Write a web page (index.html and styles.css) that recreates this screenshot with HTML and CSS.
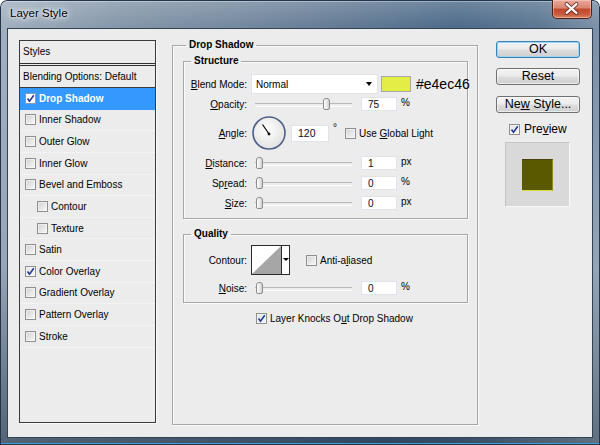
FILE: index.html
```html
<!DOCTYPE html>
<html>
<head>
<meta charset="utf-8">
<title>Layer Style</title>
<link rel="stylesheet" href="styles.css">
</head>
<body>
<div class="window">
  <div class="titlebar">
    <span class="title">Layer Style</span>
    <span class="close">
      <svg width="40" height="19" viewBox="0 0 40 19">
        <path d="M15 5 L25 14 M25 5 L15 14" stroke="#5a1c10" stroke-width="4" stroke-linecap="round"/>
        <path d="M15 5 L25 14 M25 5 L15 14" stroke="#ffffff" stroke-width="2.4" stroke-linecap="round"/>
      </svg>
    </span>
  </div>
  <div class="client">
    <div class="styles-list">
      <div class="list-head">Styles</div>
      <div class="list-blend">Blending Options: Default</div>
      <div class="item selected"><span class="cb on"><svg width="9" height="9" viewBox="0 0 9 9"><path d="M1.5 4.5 L3.5 7.2 L7.8 1.2" fill="none" stroke="#24389a" stroke-width="1.6"/></svg></span>Drop Shadow</div>
      <div class="item"><span class="cb"></span>Inner Shadow</div>
      <div class="item"><span class="cb"></span>Outer Glow</div>
      <div class="item"><span class="cb"></span>Inner Glow</div>
      <div class="item"><span class="cb"></span>Bevel and Emboss</div>
      <div class="item sub"><span class="cb"></span>Contour</div>
      <div class="item sub"><span class="cb"></span>Texture</div>
      <div class="item"><span class="cb"></span>Satin</div>
      <div class="item"><span class="cb on"><svg width="9" height="9" viewBox="0 0 9 9"><path d="M1.5 4.5 L3.5 7.2 L7.8 1.2" fill="none" stroke="#24389a" stroke-width="1.6"/></svg></span>Color Overlay</div>
      <div class="item"><span class="cb"></span>Gradient Overlay</div>
      <div class="item"><span class="cb"></span>Pattern Overlay</div>
      <div class="item"><span class="cb"></span>Stroke</div>
    </div>

    <fieldset class="group main-group">
      <legend>Drop Shadow</legend>
      <fieldset class="group sub-group structure">
        <legend>Structure</legend>
        <div class="row row-blend">
          <span class="lbl"><u>B</u>lend Mode:</span>
          <div class="select">Normal<span class="arrow"></span></div>
          <span class="swatch"></span>
          <span class="hex">#e4ec46</span>
        </div>
        <div class="row row-opacity">
          <span class="lbl"><u>O</u>pacity:</span>
          <div class="slider"><span class="thumb" style="left:72px"></span></div>
          <span class="num">75</span>
          <span class="unit">%</span>
        </div>
        <div class="row row-angle">
          <span class="lbl"><u>A</u>ngle:</span>
          <svg class="dial" width="34" height="34" viewBox="0 0 34 34">
            <defs>
              <radialGradient id="dg" cx="45%" cy="40%" r="60%">
                <stop offset="0" stop-color="#ffffff"/>
                <stop offset="1" stop-color="#e2e2e2"/>
              </radialGradient>
            </defs>
            <circle cx="17" cy="17" r="16" fill="url(#dg)" stroke="#4f6087" stroke-width="1.6"/>
            <path d="M17 18 L10.5 8.5" stroke="#111" stroke-width="1.3"/>
            <circle cx="17" cy="18" r="1.4" fill="#111"/>
          </svg>
          <span class="num num-angle">120</span>
          <span class="deg">°</span>
          <span class="cb gl"></span>
          <span class="cbtext">Use <u>G</u>lobal Light</span>
        </div>
        <div class="row row-slide">
          <span class="lbl"><u>D</u>istance:</span>
          <div class="slider"><span class="thumb" style="left:5px"></span></div>
          <span class="num">1</span>
          <span class="unit">px</span>
        </div>
        <div class="row row-slide">
          <span class="lbl">Sp<u>r</u>ead:</span>
          <div class="slider"><span class="thumb" style="left:5px"></span></div>
          <span class="num">0</span>
          <span class="unit">%</span>
        </div>
        <div class="row row-slide">
          <span class="lbl"><u>S</u>ize:</span>
          <div class="slider"><span class="thumb" style="left:5px"></span></div>
          <span class="num">0</span>
          <span class="unit">px</span>
        </div>
      </fieldset>

      <fieldset class="group sub-group quality">
        <legend>Quality</legend>
        <div class="row row-contour">
          <span class="lbl">Contour:</span>
          <div class="contour">
            <svg class="curve" width="29" height="28" viewBox="0 0 29 28">
              <rect width="29" height="28" fill="#fff"/>
              <polygon points="0,28 29,0 29,28" fill="#a6a6a6"/>
            </svg>
            <span class="contour-drop"><span class="arrow small"></span></span>
          </div>
          <span class="cb aa"></span>
          <span class="cbtext">Anti-a<u>l</u>iased</span>
        </div>
        <div class="row row-noise">
          <span class="lbl"><u>N</u>oise:</span>
          <div class="slider"><span class="thumb" style="left:5px"></span></div>
          <span class="num">0</span>
          <span class="unit">%</span>
        </div>
      </fieldset>

      <div class="knock-row">
        <span class="cb on"><svg width="9" height="9" viewBox="0 0 9 9"><path d="M1.5 4.5 L3.5 7.2 L7.8 1.2" fill="none" stroke="#24389a" stroke-width="1.6"/></svg></span>
        <span class="cbtext">Layer Knocks O<u>u</u>t Drop Shadow</span>
      </div>
    </fieldset>

    <div class="side">
      <div class="btn default">OK</div>
      <div class="btn">Reset</div>
      <div class="btn">Ne<u>w</u> Style...</div>
      <div class="preview-row">
        <span class="cb on"><svg width="9" height="9" viewBox="0 0 9 9"><path d="M1.5 4.5 L3.5 7.2 L7.8 1.2" fill="none" stroke="#24389a" stroke-width="1.6"/></svg></span>
        <span class="preview-text">Pre<u>v</u>iew</span>
      </div>
      <div class="preview-box"><div class="preview-square"></div></div>
    </div>
  </div>
</div>
</body>
</html>
```

FILE: styles.css
```css
* { box-sizing: border-box; }
html, body { margin: 0; padding: 0; background: #ffffff; }
body {
  font-family: "Liberation Sans", Arial, sans-serif;
  font-size: 10px;
  color: #000;
}
u { text-decoration: underline; text-underline-offset: 1px; }

.window {
  width: 600px;
  height: 445px;
  padding: 0 7px 7px 7px;
  display: flex;
  flex-direction: column;
  border-radius: 7px 7px 0 0;
  background:
    linear-gradient(to bottom, rgba(255,255,255,0.18) 0, rgba(255,255,255,0) 26px, rgba(0,0,0,0) 60%, rgba(10,25,45,0.45) 100%),
    linear-gradient(100deg, #a3b1c0 0%, #8597aa 18%, #6f849b 42%, #4f6c8b 68%, #5d7893 80%, #8c9eb1 93%, #a9b7c5 100%);
  box-shadow: inset 0 0 0 1px #22354a, inset 0 -2px 0 #3f9fcf, inset 0 1px 0 1px rgba(255,255,255,0.35);
}

.titlebar {
  height: 28px;
  flex: none;
  display: flex;
  justify-content: space-between;
  align-items: flex-start;
  padding-left: 3px;
}
.title {
  margin-top: 7px;
  font-size: 11.5px;
  color: #000;
  text-shadow: 0 0 6px #fff, 0 0 3px rgba(255,255,255,0.9), 0 0 10px rgba(255,255,255,0.7);
}
.close {
  width: 40px;
  height: 19px;
  margin-right: 1px;
  border: 1px solid #4a1f18;
  border-top: none;
  border-radius: 0 0 5px 5px;
  background: linear-gradient(to bottom, #e9a898 0%, #d98470 45%, #c2462d 50%, #c85a40 80%, #dc8a62 100%);
  box-shadow: inset 0 0 0 1px rgba(255,220,210,0.45);
  display: flex;
  overflow: hidden;
}
.close svg { display: block; margin: -1px 0 0 -1px; }

.client {
  flex: 1;
  background: #ececec;
  border: 1px solid #2f4256;
  display: flex;
  align-items: flex-start;
  padding: 10px 12px 0 11px;
}

/* Styles list */
.styles-list {
  width: 137px;
  height: 383px;
  margin-top: 1px;
  margin-right: 16px;
  border: 1px solid #3a3a3a;
  box-shadow: 1px 1px 0 #fafafa;
  background: #ececec;
  display: flex;
  flex-direction: column;
}
.list-head {
  height: 25px;
  padding: 5px 0 0 3px;
  border-bottom: 3px double #2e2e2e;
  line-height: 12px;
}
.list-blend {
  height: 22px;
  padding-left: 3px;
  display: flex;
  align-items: center;
  border-bottom: 1px solid #3a3a3a;
}
.item {
  height: 21.64px;
  display: flex;
  align-items: center;
  padding-left: 5px;
  border-bottom: 1px dotted #fbfbfb;
}
.item.sub { padding-left: 17px; }
.item.selected {
  background: #3399ff;
  color: #fff;
  font-weight: bold;
  border-bottom-color: #3399ff;
}
.item .cb { margin-right: 3px; }

/* checkbox */
.cb {
  flex: none;
  width: 11px;
  height: 11px;
  border: 1px solid #8e8f8f;
  background: linear-gradient(135deg, #cfcfcf 0%, #e9e9e9 60%, #f7f7f7 100%);
  box-shadow: inset 0 0 0 1px rgba(255,255,255,0.5);
  display: inline-flex;
  align-items: center;
  justify-content: center;
}
.cb.on { background: linear-gradient(135deg, #e4e4e4 0%, #f6f6f6 100%); }
.item.selected .cb { background: #fff; border-color: #7f9db9; }
.cb svg { display: block; }

/* group boxes */
.group {
  margin: 0;
  border: 1px solid #a6a6a6;
  box-shadow: inset 1px 1px 0 #fbfbfb, 1px 1px 0 #fbfbfb;
  min-inline-size: 0;
}
.group legend {
  font-weight: bold;
  line-height: 12px;
  padding: 0 3px;
  margin-left: 3px;
}
.main-group {
  width: 306px;
  height: 386px;
  margin-right: 18px;
  padding: 0 9px 0 10px;
  flex: none;
}
.sub-group {
  width: 285px;
  padding: 0 0 0 5px;
}
.sub-group legend { margin-left: 2px; }
.structure { margin-top: 4px; padding-bottom: 8px; }
.quality { margin-top: 9px; padding-bottom: 7px; }

.row { display: flex; align-items: center; }
.row > * { flex: none; }
.lbl {
  width: 58px;
  text-align: right;
  margin-right: 4px;
}
.row-blend { height: 20px; margin-top: 7px; }
.row-opacity { height: 14px; margin-top: 3px; }
.row-angle { height: 34px; margin-top: 5px; }
.row-slide { height: 14px; margin-top: 6px; }
.row-contour { height: 30px; margin-top: 5px; }
.row-noise { height: 14px; margin-top: 6px; }

.select {
  width: 127px;
  height: 20px;
  background: #fff;
  border: 1px solid #dfe3ea;
  display: flex;
  align-items: center;
  justify-content: space-between;
  padding: 0 5px 0 4px;
}
.arrow {
  width: 0;
  height: 0;
  border-left: 3.5px solid transparent;
  border-right: 3.5px solid transparent;
  border-top: 4px solid #000;
}
.arrow.small {
  border-left-width: 3px;
  border-right-width: 3px;
  border-top-width: 3px;
}
.swatch {
  width: 30px;
  height: 16px;
  margin-left: 3px;
  background: #e4ec46;
  border: 1px solid #a9a9a9;
}
.hex {
  margin-left: 5px;
  font-size: 14px;
  white-space: nowrap;
}

.slider {
  position: relative;
  width: 101px;
  height: 14px;
  margin-right: 9px;
}
.slider::before {
  content: "";
  position: absolute;
  left: 4px;
  right: 0;
  top: 6px;
  height: 2px;
  border-top: 1px solid #b9b9b9;
  border-bottom: 1px solid #fdfdfd;
}
.thumb {
  position: absolute;
  top: 1px;
  width: 7px;
  height: 12px;
  border: 1px solid #8c8c8c;
  border-radius: 3px 3px 2px 2px;
  background: linear-gradient(to right, #ffffff, #e6e6e6 60%, #cfcfcf);
}

.num {
  width: 36px;
  height: 14px;
  background: #fff;
  border: 1px solid #e0e4ea;
  padding-left: 6px;
  display: flex;
  align-items: center;
  color: #0a0a20;
}
.unit { margin-left: 4px; }
.row-opacity .unit, .row-slide .unit, .row-noise .unit { margin-top: -3px; }

.dial { margin-left: 1px; display: block; }
.num-angle {
  width: 38px;
  height: 17px;
  margin-left: 5px;
  font-size: 10.5px;
}
.deg {
  align-self: flex-start;
  margin: 6px 0 0 4px;
  font-size: 10px;
}
.cb.gl { margin-left: 8px; }
.cbtext { margin-left: 3px; white-space: nowrap; }

.contour {
  display: flex;
  width: 39px;
  height: 30px;
  border: 1px solid #2b2b2b;
  background: #fff;
}
.curve { display: block; flex: none; }
.contour-drop {
  flex: 1;
  border-left: 1px solid #2b2b2b;
  display: flex;
  align-items: center;
  justify-content: center;
  padding-bottom: 2px;
}
.cb.aa { margin-left: 16px; }

.knock-row {
  display: flex;
  align-items: center;
  margin-top: 10px;
  padding-left: 73px;
}

/* right side */
.side {
  width: 84px;
  flex: none;
  margin-top: 2px;
  display: flex;
  flex-direction: column;
}
.btn {
  height: 17px;
  border: 1px solid #707070;
  border-radius: 3px;
  background: linear-gradient(to bottom, #f3f3f3 0%, #ebebeb 48%, #dddddd 52%, #cfcfcf 100%);
  box-shadow: inset 0 0 0 1px rgba(255,255,255,0.6);
  font-size: 12.5px;
  line-height: 15px;
  text-align: center;
  margin-bottom: 11px;
}
.btn.default {
  border-color: #3c7fb1;
  box-shadow: inset 0 0 0 1px #9ad7f6;
  margin-bottom: 10px;
}
.preview-row {
  display: flex;
  align-items: center;
  margin-top: -2px;
  padding-left: 13px;
  height: 14px;
}
.preview-text { margin-left: 4px; font-size: 12px; }
.preview-box {
  width: 65px;
  height: 65px;
  margin: 6px 0 0 9px;
  background: #d9d9d9;
  border: 1px solid;
  border-color: #c4c4c4 #f8f8f8 #f8f8f8 #c4c4c4;
  display: flex;
  align-items: center;
  justify-content: center;
}
.preview-square {
  width: 31px;
  height: 32px;
  background: #5b5900;
  border-top: 1px solid #45430a;
  border-bottom: 1px solid #d7df3c;
  border-right: 1px solid #8b8c20;
}
```
